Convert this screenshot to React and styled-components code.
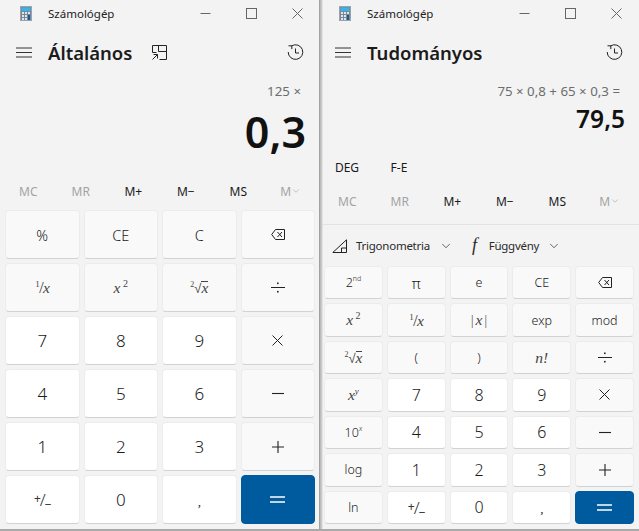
import React from 'react';
import styled, { createGlobalStyle } from 'styled-components';
import { ChevronDown } from 'lucide-react';

const GlobalStyle = createGlobalStyle`
  html, body {
    margin: 0;
    padding: 0;
    background: #f3f3f3;
    overflow: hidden;
  }
  * { box-sizing: border-box; }
`;

const Desktop = styled.div`
  width: 639px;
  height: 531px;
  display: flex;
  border-bottom: 2px solid #a9a9a9;
  font-family: "Noto Sans", "Open Sans", "Liberation Sans", sans-serif;
  color: #1a1a1a;
`;

const Window = styled.div`
  width: 320px;
  height: 529px;
  flex: none;
  display: flex;
  flex-direction: column;
  margin-left: ${({ $shadow }) => ($shadow ? -1 : 0)}px;
  background: ${({ $shadow }) =>
    $shadow
      ? 'linear-gradient(90deg, #8f8f8f 0, #b4b4b4 1px, #d2d2d2 3px, #f3f3f3 4px)'
      : '#f3f3f3'};
`;

const TitleBar = styled.div`
  height: 27px;
  margin-bottom: 1px;
  flex: none;
  display: flex;
  align-items: center;
  padding-left: 20px;
`;

const AppName = styled.span`
  font-size: 11.5px;
  margin-left: 16px;
  flex: 1;
  color: #222;
`;

const WindowButton = styled.span`
  width: 46px;
  height: 28px;
  display: flex;
  align-items: center;
  justify-content: center;
  color: #666;
`;

const Header = styled.div`
  height: 48px;
  margin-bottom: 2px;
  flex: none;
  display: flex;
  align-items: center;
  padding: 0 16px;
`;

const ModeTitle = styled.h1`
  margin: 0 0 0 16px;
  font-size: 18.5px;
  font-weight: 600;
  color: #1b1b1b;
`;

const IconSlot = styled.span`
  display: flex;
  margin-left: ${({ $left }) => $left || 0}px;
  margin-right: auto;
`;

const Expression = styled.div`
  height: 26px;
  line-height: 26px;
  text-align: right;
  padding-right: 19px;
  font-size: 13.3px;
  color: #6d6d6d;
`;

const Result = styled.div`
  text-align: right;
  padding-right: 14px;
  font-weight: 600;
  color: #111;
  height: ${({ $big }) => ($big ? 60 : 30)}px;
  line-height: ${({ $big }) => ($big ? 56 : 30)}px;
  font-size: ${({ $big }) => ($big ? 43 : 24.5)}px;
  margin-bottom: ${({ $big }) => ($big ? 12 : 0)}px;
`;

const AngleRow = styled.div`
  height: 30px;
  margin-top: 18px;
  margin-bottom: 4px;
  display: flex;
  padding-left: 2px;
  font-size: 12px;
  align-items: center;
`;

const AngleItem = styled.span`
  width: 52px;
  text-align: center;
`;

const MemoryRow = styled.div`
  height: 30px;
  flex: none;
  display: flex;
  align-items: center;
  padding: 0 3px 0 2px;
`;

const MemoryItem = styled.span`
  flex: 1;
  display: flex;
  align-items: center;
  justify-content: center;
  font-size: 12px;
  color: ${({ $off }) => ($off ? '#a3a3a3' : '#1a1a1a')};
`;

const Divider = styled.div`
  height: 1px;
  flex: none;
  margin: 8px 0 0 4px;
  background: #e3e3e3;
`;

const ToolRow = styled.div`
  height: 41px;
  flex: none;
  display: flex;
  align-items: center;
  padding-left: 13px;
  font-size: 11.5px;
  letter-spacing: -0.25px;
  color: #2a2a2a;
`;

const ToolLabel = styled.span`
  margin-left: ${({ $left }) => $left}px;
  margin-right: ${({ $right }) => $right}px;
`;

const FunctionGlyph = styled.span`
  font-family: "Liberation Serif", serif;
  font-style: italic;
  font-size: 18px;
  margin-left: 19px;
`;

const KeyGrid = styled.div`
  flex: 1;
  display: grid;
  grid-template-columns: repeat(${({ $cols }) => $cols}, 1fr);
  grid-auto-rows: 1fr;
  gap: 4px;
  padding: ${({ $cols }) => ($cols === 4 ? '4px 5px 5px 5px' : '0 5px 5px 5px')};
`;

const Key = styled.button`
  font-family: inherit;
  padding: 0;
  display: flex;
  align-items: center;
  justify-content: center;
  border-radius: 4px;
  border: 1px solid #ececec;
  border-bottom-color: #d2d2d2;
  background: ${({ $kind }) =>
    $kind === 'num' ? '#ffffff' : $kind === 'equals' ? '#005a9e' : '#f9f9f9'};
  color: ${({ $kind }) => ($kind === 'equals' ? '#ffffff' : '#1b1b1b')};
  font-weight: 300;
  font-size: ${({ $kind, $wide }) => ($kind === 'num' ? ($wide ? 17 : 16) : $wide ? 14.5 : 12.5)}px;
  ${({ $kind }) => $kind === 'equals' && 'border-color: #005a9e;'}
`;

const MathLabel = styled.span`
  font-family: "Liberation Serif", serif;
  font-style: italic;
  font-weight: 400;
  font-size: 15.5px;
  color: #444;
  white-space: nowrap;
  letter-spacing: ${({ $tight }) => ($tight ? -0.8 : 0)}px;
`;

const Sup = styled.sup`
  font-size: ${({ $size }) => $size || 9}px;
  font-style: ${({ $plain }) => ($plain ? 'normal' : 'italic')};
  line-height: 0;
  vertical-align: 6px;
`;

const Plain = styled.span`
  font-family: "Noto Sans", sans-serif;
  font-style: normal;
  font-weight: 300;
  font-size: ${({ $size }) => $size || 14}px;
`;

const Overline = styled.span`
  display: inline-block;
  line-height: 12px;
  border-top: 1px solid #444;
`;

const SignLabel = styled.span`
  font-size: 17px;
  font-weight: 300;
  white-space: nowrap;
  color: #333;
  letter-spacing: -1px;
`;

const SignMark = styled.span`
  font-size: 12px;
  font-weight: 400;
  line-height: 0;
  position: relative;
  top: ${({ $down }) => ($down ? 3 : -3)}px;
`;

const Comma = styled.span`
  font-size: 13px;
  font-family: "Liberation Serif", serif;
  font-style: italic;
  position: relative;
  top: 2px;
`;

const CalcIcon = () => (
  <svg width="12" height="15" viewBox="0 0 12 15">
    <rect x="0.5" y="0.5" width="11" height="14" fill="#7b8794" stroke="#9aa3ac" />
    <rect x="1.5" y="1.5" width="9" height="3.5" fill="#36b6e8" />
    <rect x="2" y="6" width="2" height="2" fill="#dfe5ea" />
    <rect x="5" y="6" width="2" height="2" fill="#dfe5ea" />
    <rect x="8" y="6" width="2" height="2" fill="#dfe5ea" />
    <rect x="2" y="9" width="2" height="2" fill="#dfe5ea" />
    <rect x="5" y="9" width="2" height="2" fill="#dfe5ea" />
    <rect x="2" y="12" width="2" height="2" fill="#dfe5ea" />
    <rect x="5" y="12" width="2" height="2" fill="#dfe5ea" />
    <rect x="8" y="9" width="2" height="5" fill="#0f5f9f" />
  </svg>
);

const MinimizeIcon = () => (
  <svg width="11" height="11" viewBox="0 0 11 11">
    <path d="M0.5 5.5h10" stroke="currentColor" fill="none" />
  </svg>
);

const MaximizeIcon = () => (
  <svg width="11" height="11" viewBox="0 0 11 11">
    <rect x="0.5" y="0.5" width="10" height="10" stroke="currentColor" fill="none" />
  </svg>
);

const CloseIcon = () => (
  <svg width="11" height="11" viewBox="0 0 11 11">
    <path d="M0.5 0.5l10 10M10.5 0.5l-10 10" stroke="currentColor" fill="none" />
  </svg>
);

const MenuIcon = () => (
  <svg width="16" height="11" viewBox="0 0 16 11">
    <path d="M0 1h16M0 5.5h16M0 10h16" stroke="#333" fill="none" />
  </svg>
);

const KeepOnTopIcon = () => (
  <svg width="15" height="15" viewBox="0 0 15 15" fill="none" stroke="#222">
    <path d="M0.5 7.5v-7h14v14h-7M0.5 7.5h4M6.5 0.5v6h8" />
    <path d="M0.5 14.5l5-5M1.5 9.5h4v4" />
  </svg>
);

const HistoryIcon = () => (
  <svg width="17" height="17" viewBox="0 0 17 17" fill="none" stroke="#222">
    <path d="M1.5 1.8h3.3v3.3" />
    <path d="M4.6 1.9A7.3 7.3 0 1 1 1.2 8" />
    <path d="M8.5 4.5v4.5h3.5" />
  </svg>
);

const BackspaceIcon = () => (
  <svg width="14" height="11" viewBox="0 0 14 11" fill="none" stroke="#222">
    <path d="M4.5 0.5h9v10h-9L0.7 5.5z" />
    <path d="M6.5 3l4.5 5M11 3l-4.5 5" />
  </svg>
);

const DivideIcon = () => (
  <svg width="14" height="11" viewBox="0 0 14 11">
    <path d="M0 5.5h14" stroke="#222" />
    <rect x="6" y="0.5" width="1.6" height="1.6" fill="#222" />
    <rect x="6" y="8.9" width="1.6" height="1.6" fill="#222" />
  </svg>
);

const TriangleIcon = () => (
  <svg width="15" height="14" viewBox="0 0 15 14" fill="none" stroke="#222">
    <path d="M0.8 13.5L14.5 0.8v12.7zM9.5 13.5v-4.5h5" />
  </svg>
);

const TimesIcon = () => (
  <svg width="11" height="11" viewBox="0 0 11 11">
    <path d="M0.5 0.5l10 10M10.5 0.5l-10 10" stroke="#222" fill="none" />
  </svg>
);

const MinusIcon = () => (
  <svg width="12" height="3" viewBox="0 0 12 3">
    <path d="M0 1.5h12" stroke="#222" strokeWidth="1.1" fill="none" />
  </svg>
);

const PlusIcon = () => (
  <svg width="12" height="12" viewBox="0 0 12 12">
    <path d="M0 6h12M6 0v12" stroke="#222" strokeWidth="1.1" fill="none" />
  </svg>
);

const EqualsIcon = () => (
  <svg width="15" height="7" viewBox="0 0 15 7">
    <path d="M0 1h15M0 6h15" stroke="#fff" strokeWidth="1.4" fill="none" />
  </svg>
);

const SquareRoot = () => (
  <MathLabel>
    <Sup $plain $size={8}>2</Sup>
    <Plain $size={13}>√</Plain>
    <Overline>x</Overline>
  </MathLabel>
);

const XSquared = () => (
  <MathLabel>x<Sup $plain $size={10}> 2</Sup></MathLabel>
);

const Inverse = () => (
  <MathLabel $tight>
    <Sup $plain $size={9}>1</Sup><Plain $size={14}>/</Plain>x
  </MathLabel>
);

const PlusMinus = () => (
  <SignLabel>
    <SignMark>+</SignMark>/<SignMark $down>−</SignMark>
  </SignLabel>
);

const memoryKeys = ['MC', 'MR', 'M+', 'M−', 'MS'];

const standardKeys = [
  { label: '%', kind: 'op', wide: true },
  { label: 'CE', kind: 'op' },
  { label: 'C', kind: 'op' },
  { label: <BackspaceIcon />, kind: 'op' },
  { label: <Inverse />, kind: 'op' },
  { label: <XSquared />, kind: 'op' },
  { label: <SquareRoot />, kind: 'op' },
  { label: <DivideIcon />, kind: 'op' },
  { label: '7', kind: 'num', wide: true },
  { label: '8', kind: 'num', wide: true },
  { label: '9', kind: 'num', wide: true },
  { label: <TimesIcon />, kind: 'op' },
  { label: '4', kind: 'num', wide: true },
  { label: '5', kind: 'num', wide: true },
  { label: '6', kind: 'num', wide: true },
  { label: <MinusIcon />, kind: 'op' },
  { label: '1', kind: 'num', wide: true },
  { label: '2', kind: 'num', wide: true },
  { label: '3', kind: 'num', wide: true },
  { label: <PlusIcon />, kind: 'op' },
  { label: <PlusMinus />, kind: 'num' },
  { label: '0', kind: 'num', wide: true },
  { label: <Comma>,</Comma>, kind: 'num', wide: true },
  { label: <EqualsIcon />, kind: 'equals' },
];

const scientificKeys = [
  { label: <span>2<Sup $plain $size={7}>nd</Sup></span>, kind: 'op' },
  { label: 'π', kind: 'op', wide: true },
  { label: 'e', kind: 'op' },
  { label: 'CE', kind: 'op' },
  { label: <BackspaceIcon />, kind: 'op' },
  { label: <XSquared />, kind: 'op' },
  { label: <Inverse />, kind: 'op' },
  { label: <MathLabel><Plain $size={12}>|</Plain>x<Plain $size={12}>|</Plain></MathLabel>, kind: 'op' },
  { label: 'exp', kind: 'op' },
  { label: 'mod', kind: 'op' },
  { label: <SquareRoot />, kind: 'op' },
  { label: '(', kind: 'op' },
  { label: ')', kind: 'op' },
  { label: <MathLabel>n!</MathLabel>, kind: 'op' },
  { label: <DivideIcon />, kind: 'op' },
  { label: <MathLabel>x<Sup>y</Sup></MathLabel>, kind: 'op' },
  { label: '7', kind: 'num' },
  { label: '8', kind: 'num' },
  { label: '9', kind: 'num' },
  { label: <TimesIcon />, kind: 'op' },
  { label: <span>10<Sup $size={7}>x</Sup></span>, kind: 'op' },
  { label: '4', kind: 'num' },
  { label: '5', kind: 'num' },
  { label: '6', kind: 'num' },
  { label: <MinusIcon />, kind: 'op' },
  { label: 'log', kind: 'op' },
  { label: '1', kind: 'num' },
  { label: '2', kind: 'num' },
  { label: '3', kind: 'num' },
  { label: <PlusIcon />, kind: 'op' },
  { label: 'ln', kind: 'op' },
  { label: <PlusMinus />, kind: 'num' },
  { label: '0', kind: 'num' },
  { label: <Comma>,</Comma>, kind: 'num' },
  { label: <EqualsIcon />, kind: 'equals' },
];

const WindowTitle = () => (
  <TitleBar>
    <CalcIcon />
    <AppName>Számológép</AppName>
    <WindowButton><MinimizeIcon /></WindowButton>
    <WindowButton><MaximizeIcon /></WindowButton>
    <WindowButton><CloseIcon /></WindowButton>
  </TitleBar>
);

const Memory = () => (
  <MemoryRow>
    {memoryKeys.map((name, i) => (
      <MemoryItem key={name} $off={i < 2}>{name}</MemoryItem>
    ))}
    <MemoryItem $off>
      M<ChevronDown size={10} strokeWidth={1.5} />
    </MemoryItem>
  </MemoryRow>
);

const Keys = ({ cols, items }) => (
  <KeyGrid $cols={cols}>
    {items.map((item, i) => (
      <Key key={i} $kind={item.kind} $wide={cols === 4 || item.wide}>{item.label}</Key>
    ))}
  </KeyGrid>
);

const App = () => (
  <Desktop>
    <GlobalStyle />
    <Window>
      <WindowTitle />
      <Header>
        <MenuIcon />
        <ModeTitle>Általános</ModeTitle>
        <IconSlot $left={20}><KeepOnTopIcon /></IconSlot>
        <HistoryIcon />
      </Header>
      <Expression>125 ×</Expression>
      <Result $big>0,3</Result>
      <Memory />
      <Keys cols={4} items={standardKeys} />
    </Window>
    <Window $shadow>
      <WindowTitle />
      <Header>
        <MenuIcon />
        <ModeTitle>Tudományos</ModeTitle>
        <IconSlot />
        <HistoryIcon />
      </Header>
      <Expression>75 × 0,8 + 65 × 0,3 =</Expression>
      <Result>79,5</Result>
      <AngleRow>
        <AngleItem>DEG</AngleItem>
        <AngleItem>F-E</AngleItem>
      </AngleRow>
      <Memory />
      <Divider />
      <ToolRow>
        <TriangleIcon />
        <ToolLabel $left={9} $right={9}>Trigonometria</ToolLabel>
        <ChevronDown size={14} strokeWidth={1.2} />
        <FunctionGlyph>f</FunctionGlyph>
        <ToolLabel $left={12} $right={8}>Függvény</ToolLabel>
        <ChevronDown size={14} strokeWidth={1.2} />
      </ToolRow>
      <Keys cols={5} items={scientificKeys} />
    </Window>
  </Desktop>
);

export default App;
